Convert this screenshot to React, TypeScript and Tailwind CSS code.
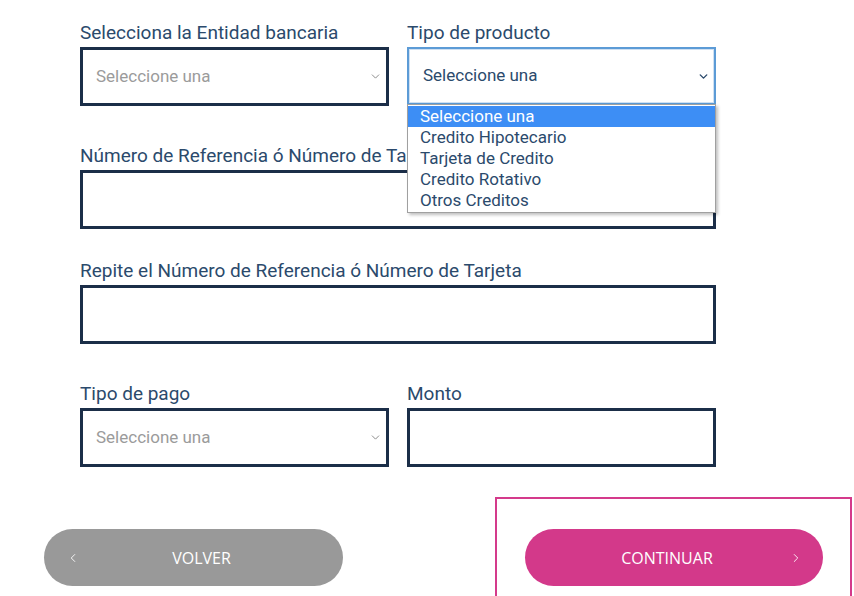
import { ChevronDown, ChevronLeft, ChevronRight } from 'lucide-react';

const labelCls = 'block text-[19px] leading-[23px] text-[#2b4a6c] mb-[3px]';
const boxCls = 'h-[59px] border-[3px] border-[#1b2e48] bg-white';

const options = ['Seleccione una', 'Credito Hipotecario', 'Tarjeta de Credito', 'Credito Rotativo', 'Otros Creditos'];

function ClosedSelect() {
  return (
    <div className={`${boxCls} flex items-center justify-between pl-[13px] pr-[4px]`}>
      <span className="text-[17px] text-[#9b9b9b]">Seleccione una</span>
      <ChevronDown className="w-[13px] h-[13px] text-[#8a8a8a]" strokeWidth={1.8} />
    </div>
  );
}

function OpenSelect() {
  return (
    <div className="relative">
      <div className="h-[58px] border-2 border-[#5c9bd6] bg-white flex items-center justify-between pl-[14px] pr-[4px] shadow-[inset_0_0_0_1px_#cfe0f2]">
        <span className="text-[17px] text-[#2b4a6c]">Seleccione una</span>
        <ChevronDown className="w-[13px] h-[13px] text-[#2b4a6c]" strokeWidth={2.6} />
      </div>
      {/* native dropdown list */}
      <ul className="absolute left-0 right-0 top-[57px] py-px bg-white border border-[#a0a0a0] shadow-[2px_2px_3px_rgba(0,0,0,0.25)] z-10">
        {options.map((o, i) => (
          <li
            key={o}
            className={
              i === 0
                ? 'h-[21px] leading-[21px] pl-[12px] text-[17px] bg-[#3d8ef5] text-white'
                : 'h-[21px] leading-[21px] pl-[12px] text-[17px] text-[#2b4a6c]'
            }
          >
            {o}
          </li>
        ))}
      </ul>
    </div>
  );
}

export default function App() {
  return (
    <div className="h-[596px] w-[854px] overflow-hidden bg-white font-['Roboto',sans-serif]">
      <div className="ml-[80px] w-[636px] pt-[21px]">
        <div className="grid grid-cols-2 gap-x-[18px]">
          <div>
            <label className={labelCls}>Selecciona la Entidad bancaria</label>
            <ClosedSelect />
          </div>
          <div className="relative z-10">
            <label className={labelCls}>Tipo de producto</label>
            <OpenSelect />
          </div>
        </div>

        <div className="mt-[38px]">
          <label className={labelCls}>Número de Referencia ó Número de Tarjeta</label>
          <div className={boxCls} />
        </div>

        <div className="mt-[30px]">
          <label className={labelCls}>Repite el Número de Referencia ó Número de Tarjeta</label>
          <div className={boxCls} />
        </div>

        <div className="mt-[38px] grid grid-cols-2 gap-x-[18px]">
          <div>
            <label className={labelCls}>Tipo de pago</label>
            <ClosedSelect />
          </div>
          <div>
            <label className={labelCls}>Monto</label>
            <div className={boxCls} />
          </div>
        </div>
      </div>

      <div className="mt-[30px] flex items-start font-['Open_Sans',sans-serif]">
        <button className="ml-[44px] mt-[32px] w-[299px] h-[57px] rounded-full bg-[#999999] text-white flex items-center relative pl-[16px]">
          <ChevronLeft className="absolute left-[22px] w-[14px] h-[14px]" strokeWidth={1.5} />
          <span className="flex-1 text-center text-[16px]">VOLVER</span>
        </button>
        <div className="ml-[152px] w-[357px] h-[104px] border-2 border-[#d43a8b] pl-[28px] pt-[30px]">
          <button className="w-[298px] h-[57px] rounded-full bg-[#d3398a] text-white flex items-center relative pr-[14px]">
            <span className="flex-1 text-center text-[16px]">CONTINUAR</span>
            <ChevronRight className="absolute right-[20px] w-[14px] h-[14px]" strokeWidth={1.5} />
          </button>
        </div>
      </div>
    </div>
  );
}
